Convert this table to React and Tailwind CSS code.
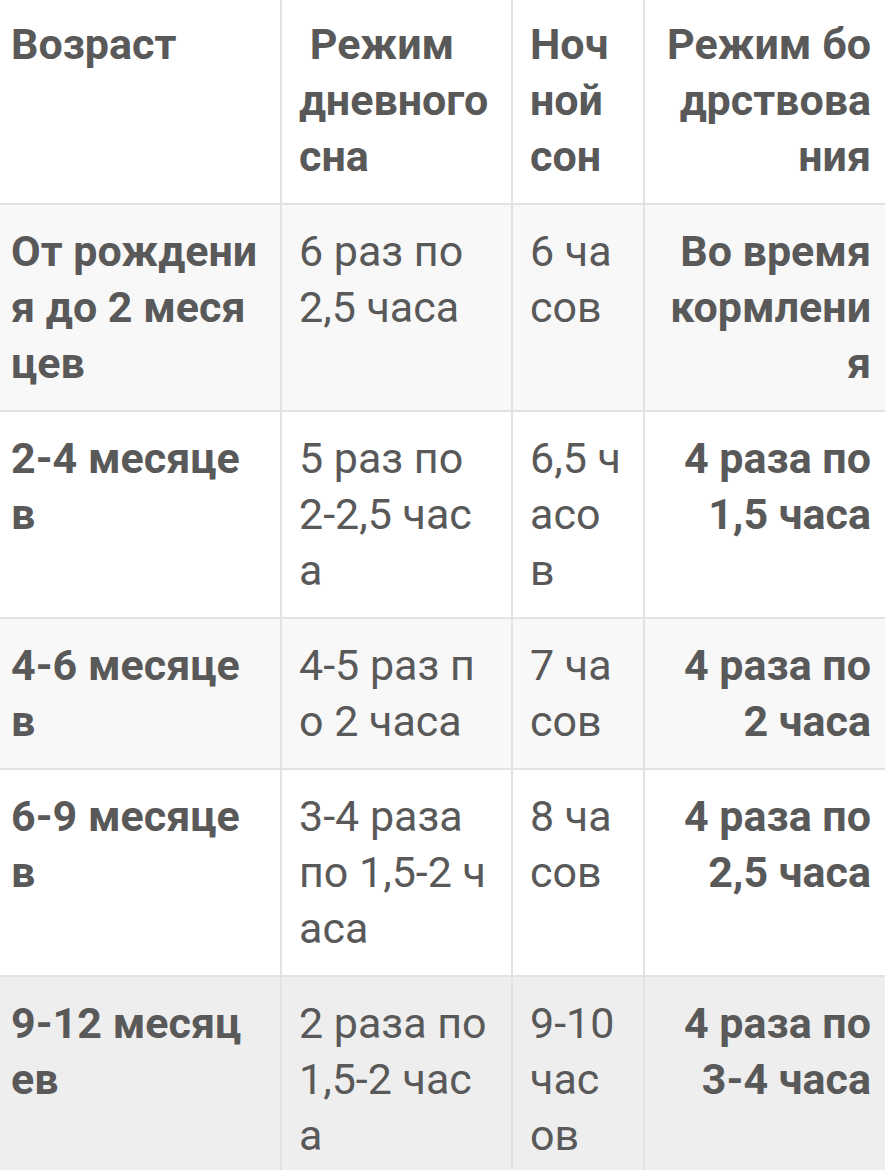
import React from "react";

const rows = [
  {
    bg: "bg-[#f8f8f8]",
    c: [["От рождени", "я до 2 меся", "цев"], ["6 раз по", "2,5 часа"], ["6 ча", "сов"], ["Во время", "кормлени", "я"]],
  },
  {
    bg: "bg-white",
    c: [["2-4 месяце", "в"], ["5 раз по", "2-2,5 час", "а"], ["6,5 ч", "асо", "в"], ["4 раза по", "1,5 часа"]],
  },
  {
    bg: "bg-[#f8f8f8]",
    c: [["4-6 месяце", "в"], ["4-5 раз п", "о 2 часа"], ["7 ча", "сов"], ["4 раза по", "2 часа"]],
  },
  {
    bg: "bg-white",
    c: [["6-9 месяце", "в"], ["3-4 раза", "по 1,5-2 ч", "аса"], ["8 ча", "сов"], ["4 раза по", "2,5 часа"]],
  },
  {
    bg: "bg-[#eeeeee]",
    c: [["9-12 месяц", "ев"], ["2 раза по", "1,5-2 час", "а"], ["9-10", "час", "ов"], ["4 раза по", "3-4 часа"]],
  },
];

function Lines({ lines }) {
  return (
    <>
      {lines.map((l, i) => (
        <div key={i} className="whitespace-pre">
          {l}
        </div>
      ))}
    </>
  );
}

export default function App() {
  const font = { fontFamily: "Roboto, 'Noto Sans', sans-serif" };
  return (
    <div className="w-[885px] h-[1170px] overflow-hidden bg-white text-[#595959] text-[43px] leading-[56px]" style={font}>
      <div className="grid grid-cols-[280px_231px_132px_242px] bg-white font-bold">
        <div className="pl-[11px] pr-2 pt-[16px] pb-[19px]">
          <Lines lines={["Возраст"]} />
        </div>
        <div className="border-l-2 border-[#e2e2e2] pl-[17px] pt-[16px] pb-[19px]">
          <Lines lines={[" Режим", "дневного", "сна"]} />
        </div>
        <div className="border-l-2 border-[#e2e2e2] pl-[17px] pt-[16px] pb-[19px]">
          <Lines lines={["Ноч", "ной", "сон"]} />
        </div>
        <div className="border-l-2 border-[#e2e2e2] pr-[14px] text-right pt-[16px] pb-[19px]">
          <Lines lines={["Режим бо", "дрствова", "ния"]} />
        </div>
      </div>
      {rows.map((r, i) => (
        <div key={i} className={`grid grid-cols-[280px_231px_132px_242px] border-t-2 border-[#e2e2e2] ${r.bg}`}>
          <div className="pl-[11px] pr-2 pt-[18px] pb-[19px] font-bold">
            <Lines lines={r.c[0]} />
          </div>
          <div className="border-l-2 border-[#e2e2e2] pl-[17px] pt-[18px] pb-[19px]">
            <Lines lines={r.c[1]} />
          </div>
          <div className="border-l-2 border-[#e2e2e2] pl-[17px] pt-[18px] pb-[19px]">
            <Lines lines={r.c[2]} />
          </div>
          <div className="border-l-2 border-[#e2e2e2] pr-[14px] text-right pt-[18px] pb-[19px] font-bold">
            <Lines lines={r.c[3]} />
          </div>
        </div>
      ))}
    </div>
  );
}
